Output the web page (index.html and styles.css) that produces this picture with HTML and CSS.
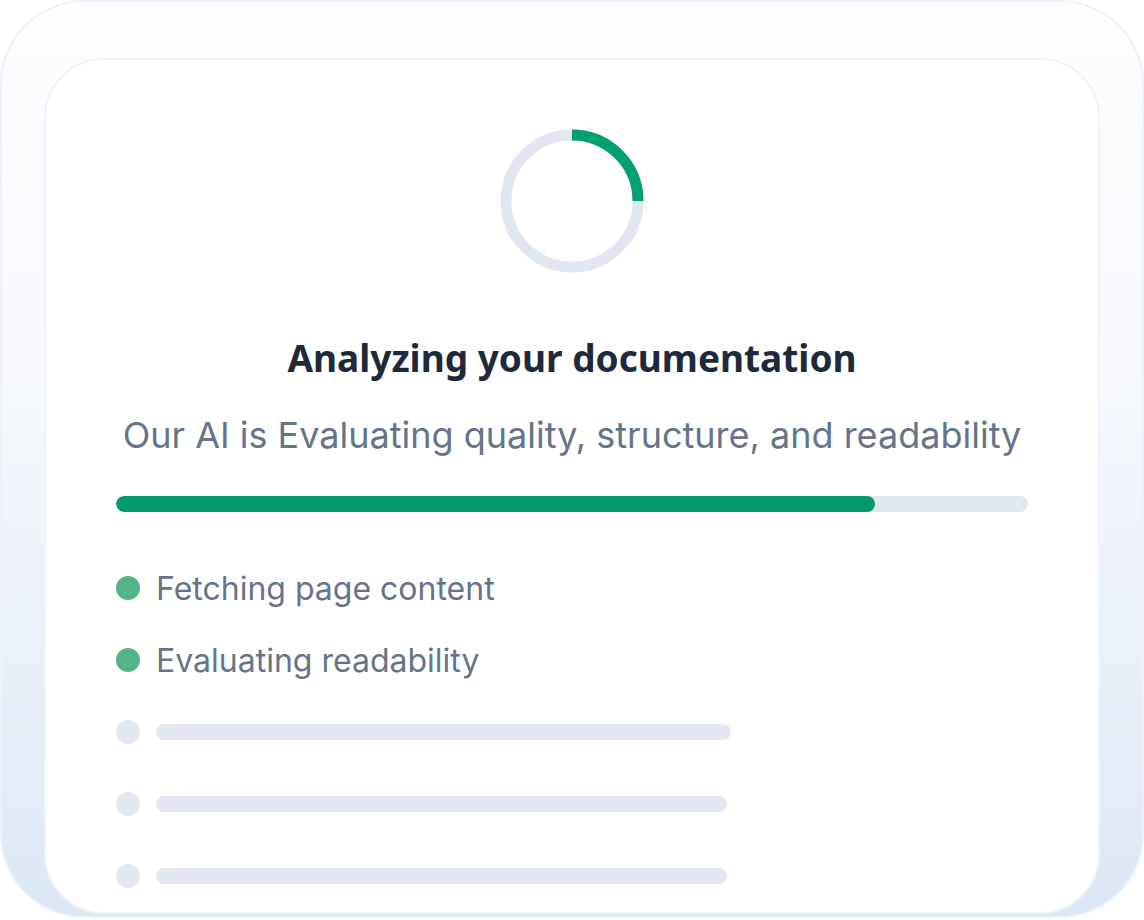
FILE: index.html
```html
<!DOCTYPE html>
<html lang="en">
<head>
  <meta charset="UTF-8" />
  <meta name="viewport" content="width=device-width, initial-scale=1.0"/>
  <title>Analyzing your documentation</title>
  <link rel="stylesheet" href="styles.css">
</head>
<body>
  <div class="frame">
    <div class="card">
      <svg class="spinner" width="144" height="144" viewBox="0 0 144 144">
        <circle cx="72" cy="72" r="66" fill="none" stroke="#e1e7f1" stroke-width="11"/>
        <path d="M72 6 A66 66 0 0 1 138 72" fill="none" stroke="#04a070" stroke-width="11"/>
      </svg>
      <h2 class="title">Analyzing your documentation</h2>
      <p class="subtitle">Our AI is Evaluating quality, structure, and readability</p>
      <div class="progress"><div class="progress-fill" style="width: 83.2%"></div></div>

      <ul class="steps">
        <li class="step done"><span class="dot"></span>Fetching page content</li>
        <li class="step done"><span class="dot"></span>Evaluating readability</li>
        <li class="step"><span class="dot"></span><span class="line" style="width: 575px"></span></li>
        <li class="step"><span class="dot"></span><span class="line" style="width: 571px"></span></li>
        <li class="step"><span class="dot"></span><span class="line" style="width: 571px"></span></li>
      </ul>
    </div>
  </div>
</body>
</html>
```

FILE: styles.css
```css
body {
  margin: 0;
  background: #ffffff;
  font-family: Inter, "Noto Sans", sans-serif;
}

.frame {
  width: 1144px;
  height: 918px;
  box-sizing: border-box;
  padding: 56px 42px 2px;
  border: 2px solid #eef2f8;
  border-radius: 84px;
  background: linear-gradient(#fcfdfe 0%, #f7f9fd 40%, #dce7f5 100%);
}

.card {
  height: 100%;
  box-sizing: border-box;
  padding: 69px 70px 0;
  background: #ffffff;
  border: 2px solid #eef3fa;
  border-radius: 60px;
  display: flex;
  flex-direction: column;
  align-items: center;
}

.spinner {
  display: block;
}

.title {
  margin: 63px 0 0;
  font-family: "Noto Sans", sans-serif;
  font-size: 37px;
  line-height: 44px;
  font-weight: 700;
  color: #1e293b;
}

.subtitle {
  margin: 35px 0 0;
  font-size: 36px;
  line-height: 40px;
  color: #66748b;
}

.progress {
  align-self: stretch;
  margin-top: 41px;
  height: 16px;
  border-radius: 8px;
  background: #e2e8f0;
  overflow: hidden;
}

.progress-fill {
  height: 100%;
  border-radius: 8px;
  background: #039a6c;
}

.steps {
  align-self: stretch;
  list-style-type: none;
  margin: 56px 0 0;
  padding: 0;
  display: flex;
  flex-direction: column;
  gap: 32px;
}

.step {
  display: flex;
  align-items: center;
  gap: 16px;
  height: 40px;
  font-size: 32px;
  color: #66748b;
}

.dot {
  width: 24px;
  height: 24px;
  border-radius: 50%;
  background: #e2e8f0;
  flex-shrink: 0;
}

.step.done .dot {
  background: #52b487;
}

.line {
  height: 16px;
  border-radius: 8px;
  background: #e2e8f0;
}
```
